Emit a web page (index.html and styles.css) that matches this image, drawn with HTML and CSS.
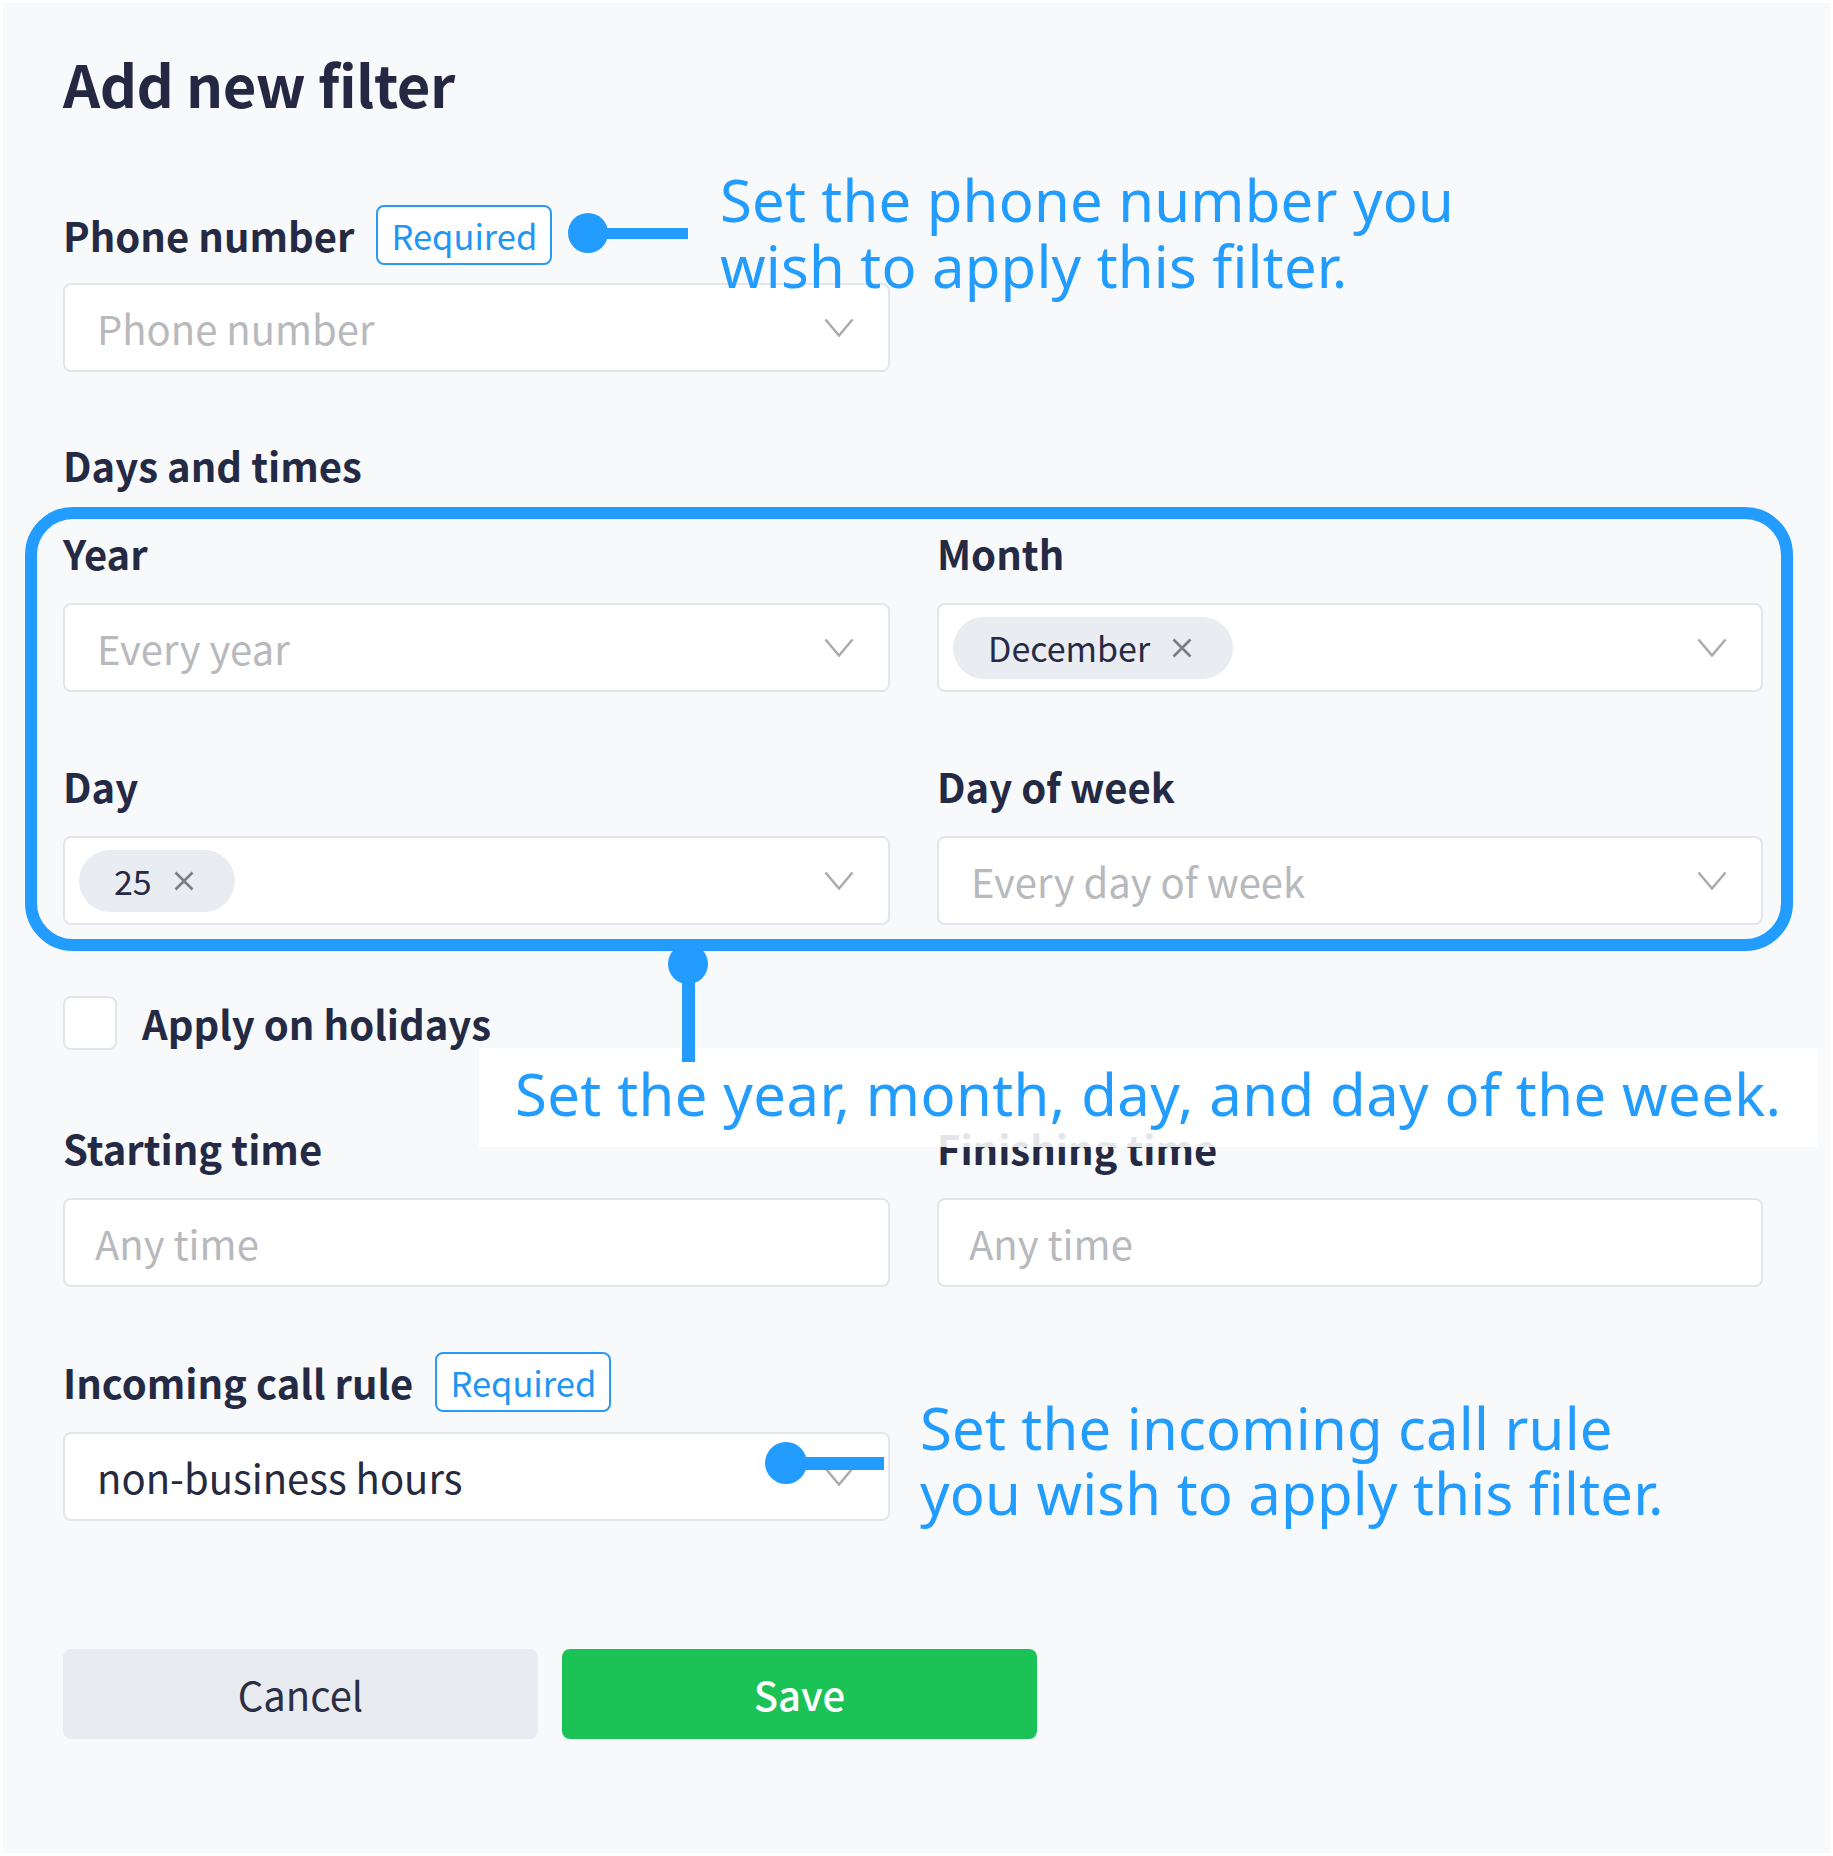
FILE: index.html
```html
<!DOCTYPE html>
<html lang="en">
<head>
<meta charset="utf-8">
<title>Add new filter</title>
<link rel="stylesheet" href="styles.css">
</head>
<body>
<div class="dialog">
  <h1 class="title">Add new filter</h1>

  <section class="field field-phone">
    <div class="label-row">
      <span class="label">Phone number</span>
      <span class="badge">Required</span>
    </div>
    <div class="select half">
      <span class="placeholder">Phone number</span>
      <svg class="chev" viewBox="0 0 30 19"><polyline points="1.5,1.5 15,17.5 28.5,1.5"/></svg>
    </div>
  </section>

  <section class="group">
    <div class="label group-label">Days and times</div>
    <div class="days-grid">
      <div class="field">
        <div class="label-row"><span class="label">Year</span></div>
        <div class="select">
          <span class="placeholder">Every year</span>
          <svg class="chev" viewBox="0 0 30 19"><polyline points="1.5,1.5 15,17.5 28.5,1.5"/></svg>
        </div>
      </div>
      <div class="field">
        <div class="label-row"><span class="label">Month</span></div>
        <div class="select select-chip">
          <span class="chip">December<svg class="x" viewBox="0 0 20 20"><path d="M1.5 1.5L18.5 18.5M18.5 1.5L1.5 18.5"/></svg></span>
          <svg class="chev" viewBox="0 0 30 19"><polyline points="1.5,1.5 15,17.5 28.5,1.5"/></svg>
        </div>
      </div>
      <div class="field">
        <div class="label-row"><span class="label">Day</span></div>
        <div class="select select-chip">
          <span class="chip">25<svg class="x" viewBox="0 0 20 20"><path d="M1.5 1.5L18.5 18.5M18.5 1.5L1.5 18.5"/></svg></span>
          <svg class="chev" viewBox="0 0 30 19"><polyline points="1.5,1.5 15,17.5 28.5,1.5"/></svg>
        </div>
      </div>
      <div class="field">
        <div class="label-row"><span class="label">Day of week</span></div>
        <div class="select">
          <span class="placeholder">Every day of week</span>
          <svg class="chev" viewBox="0 0 30 19"><polyline points="1.5,1.5 15,17.5 28.5,1.5"/></svg>
        </div>
      </div>
      <div class="highlight"></div>
    </div>
  </section>

  <label class="check-row">
    <span class="checkbox"></span>
    <span class="label">Apply on holidays</span>
  </label>

  <div class="time-grid">
    <div class="field">
      <div class="label-row"><span class="label">Starting time</span></div>
      <div class="select input"><span class="placeholder">Any time</span></div>
    </div>
    <div class="field">
      <div class="label-row"><span class="label">Finishing time</span></div>
      <div class="select input"><span class="placeholder">Any time</span></div>
    </div>
  </div>

  <section class="field field-rule">
    <div class="label-row">
      <span class="label">Incoming call rule</span>
      <span class="badge">Required</span>
    </div>
    <div class="select half">
      <span class="value">non-business hours</span>
      <svg class="chev" viewBox="0 0 30 19"><polyline points="1.5,1.5 15,17.5 28.5,1.5"/></svg>
    </div>
  </section>

  <div class="actions">
    <button class="btn btn-cancel">Cancel</button>
    <button class="btn btn-save">Save</button>
  </div>

  <!-- annotation overlays -->
  <div class="pointer pointer-phone"><span class="dot"></span><span class="stem"></span></div>
  <p class="note note-phone">Set the phone number you<br>wish to apply this filter.</p>

  <div class="note-box">Set the year, month, day, and day of the week.</div>
  <div class="pointer pointer-days"><span class="dot"></span><span class="stem"></span></div>

  <div class="pointer pointer-rule"><span class="dot"></span><span class="stem"></span></div>
  <p class="note note-rule">Set the incoming call rule<br>you wish to apply this filter.</p>
</div>
</body>
</html>
```

FILE: styles.css
```css
* { box-sizing: border-box; }

html, body {
  margin: 0;
  padding: 0;
  background: #ffffff;
}

body {
  font-family: "Noto Sans CJK JP", "Noto Sans", sans-serif;
  color: #252a44;
}

.dialog {
  position: relative;
  margin: 3px;
  width: 1827px;
  height: 1850px;
  background: #f8f9fb;
  padding: 40px 0 0 60px;
  display: flex;
  flex-direction: column;
  align-items: flex-start;
}

.title {
  margin: 0;
  font-size: 58px;
  line-height: 80px;
  font-weight: 700;
  letter-spacing: -0.5px;
  color: #252843;
}

.field {
  display: flex;
  flex-direction: column;
  gap: 20px;
}

.field-phone { margin-top: 82px; width: 827px; gap: 18px; }

.label-row {
  display: flex;
  align-items: center;
  gap: 22px;
  height: 60px;
}

.label {
  font-size: 40px;
  line-height: 60px;
  font-weight: 700;
  color: #252a44;
  white-space: nowrap;
}

.badge {
  height: 60px;
  border: 2px solid #2a9bf5;
  border-radius: 8px;
  padding: 0 13px;
  font-size: 34.5px;
  line-height: 56px;
  color: #1f96f2;
  background: #ffffff;
}

.select {
  height: 89px;
  width: 100%;
  background: #ffffff;
  border: 2px solid #e3e5ea;
  border-radius: 8px;
  display: flex;
  align-items: center;
  justify-content: space-between;
  padding: 0 34px 0 32px;
}

.select-chip { padding-left: 14px; }
.input { padding-left: 30px; }

.placeholder {
  font-size: 40px;
  color: #b8b9bd;
  white-space: nowrap;
}

.value {
  font-size: 40px;
  color: #262a3f;
  white-space: nowrap;
}

.chev {
  width: 30px;
  height: 19px;
  flex: none;
}
.chev polyline {
  fill: none;
  stroke: #a9abb1;
  stroke-width: 2.5;
}

.chip {
  display: inline-flex;
  align-items: center;
  height: 62px;
  border-radius: 31px;
  background: #e9edf2;
  font-size: 34px;
  color: #262a45;
  padding: 0 41px 0 35px;
  gap: 22px;
}

.x { width: 20px; height: 20px; flex: none; }
.x path {
  fill: none;
  stroke: #7a7c80;
  stroke-width: 2.6;
}

.group { margin-top: 63px; }
.group-label { display: block; }

.days-grid {
  position: relative;
  margin-top: 28px;
  width: 1700px;
  display: grid;
  grid-template-columns: 827px 826px;
  column-gap: 47px;
  row-gap: 64px;
}

.highlight {
  position: absolute;
  top: -16px;
  left: -38px;
  right: -30px;
  bottom: -26px;
  border: 12px solid #229dff;
  border-radius: 48px;
  pointer-events: none;
}

.check-row {
  margin-top: 68px;
  display: flex;
  align-items: center;
  gap: 25px;
}

.checkbox {
  width: 54px;
  height: 54px;
  background: #ffffff;
  border: 2px solid #e3e5ea;
  border-radius: 8px;
}

.time-grid {
  margin-top: 65px;
  width: 1700px;
  display: grid;
  grid-template-columns: 827px 826px;
  column-gap: 47px;
}

.field-rule { margin-top: 65px; width: 827px; }

.actions {
  margin-top: 128px;
  display: flex;
  gap: 24px;
}

.btn {
  width: 475px;
  height: 90px;
  border: none;
  border-radius: 8px;
  font-family: "Noto Sans CJK JP", "Noto Sans", sans-serif;
  font-size: 40px;
}
.btn-cancel {
  background: #e8ebf0;
  color: #2b2e45;
}
.btn-save {
  background: #1bc255;
  color: #ffffff;
  font-weight: 500;
}

/* annotation overlays */
.pointer {
  position: absolute;
  display: flex;
  align-items: center;
}
.dot {
  flex: none;
  width: 40px;
  height: 40px;
  border-radius: 50%;
  background: #229dff;
}
.stem {
  flex: none;
  background: #229dff;
}

.pointer-phone { left: 565px; top: 210px; }
.pointer-phone .stem { width: 82px; height: 11px; margin-left: -2px; }

.pointer-days {
  left: 665px;
  top: 941px;
  flex-direction: column;
  z-index: 2;
}
.pointer-days .stem { width: 13px; height: 80px; margin-top: -2px; }

.pointer-rule { left: 762px; top: 1439px; }
.pointer-rule .dot { width: 42px; height: 42px; }
.pointer-rule .stem { width: 79px; height: 13px; margin-left: -2px; }

.note {
  position: absolute;
  margin: 0;
  font-family: "Noto Sans", "DejaVu Sans", sans-serif;
  font-size: 58px;
  line-height: 66px;
  letter-spacing: 0.2px;
  color: #229dff;
  white-space: nowrap;
}
.note-phone { left: 717px; top: 164px; }
.note-rule { left: 917px; top: 1392px; line-height: 65px; }

.note-box {
  position: absolute;
  left: 476px;
  top: 1045px;
  width: 1339px;
  height: 99px;
  padding-left: 36px;
  background: rgba(255, 255, 255, 0.88);
  font-family: "Noto Sans", "DejaVu Sans", sans-serif;
  font-size: 58px;
  line-height: 91px;
  letter-spacing: 0.4px;
  color: #229dff;
  white-space: nowrap;
  z-index: 1;
}
```
